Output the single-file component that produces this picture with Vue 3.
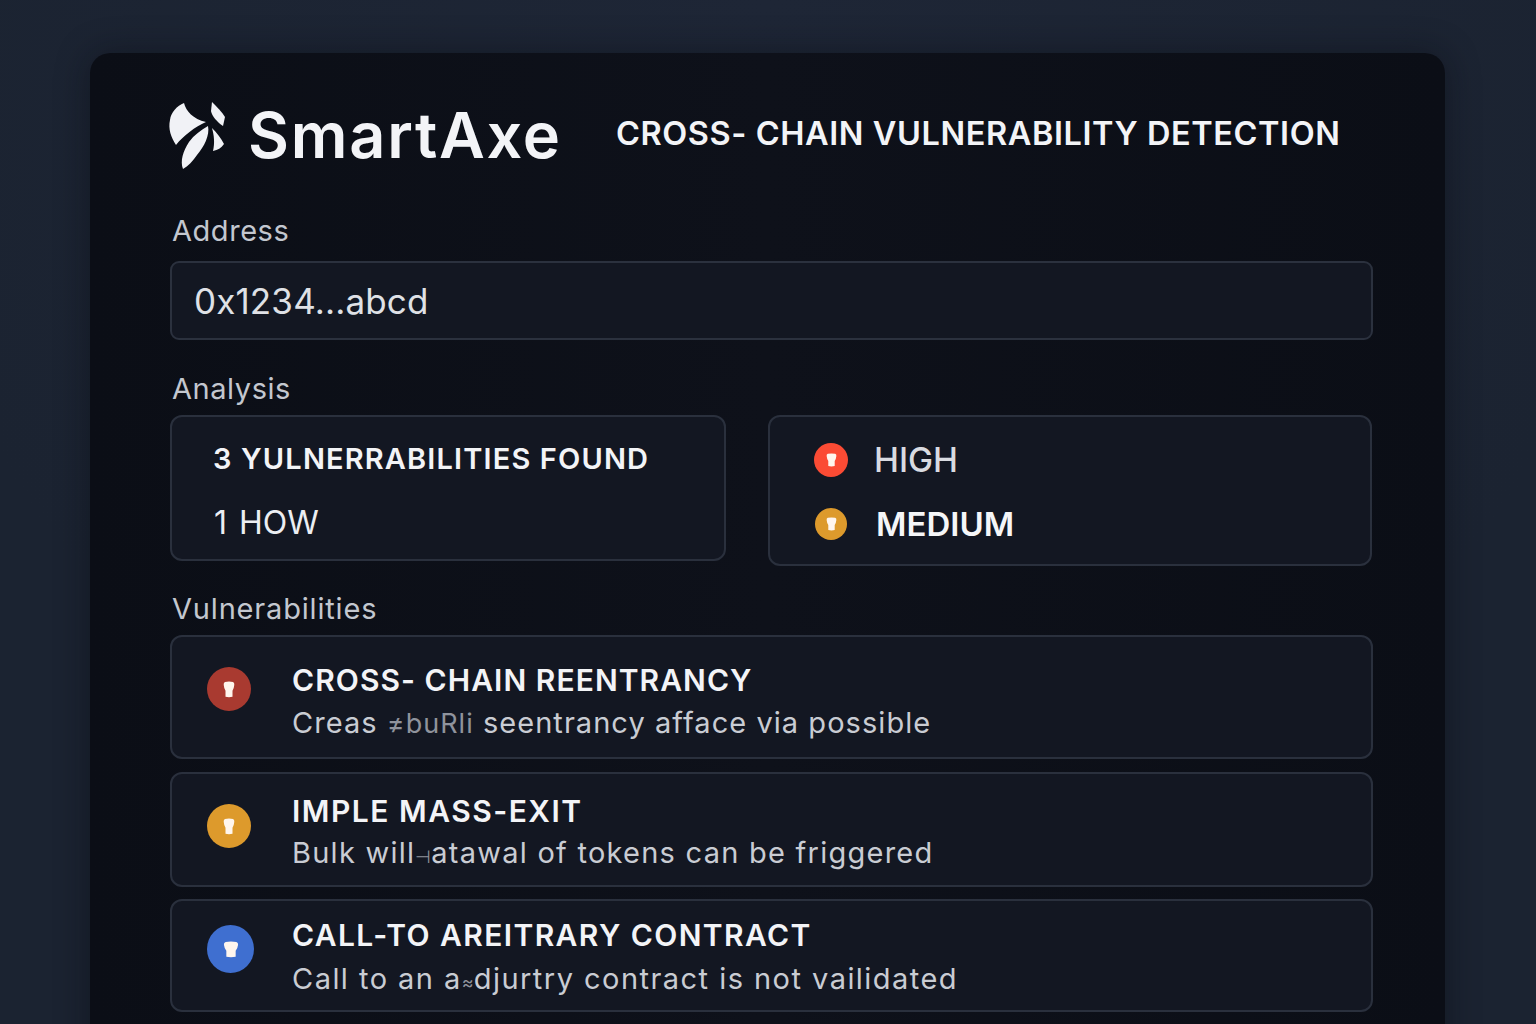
<script setup>
const icon = 'M2 .8Q6 0 10 .8Q11.500 1.200 11.300 3Q11 6 9.500 8V13Q6 13.800 2.500 13V8Q1 6 .7 3Q.5 1.200 2 .8Z'
const stats = [
  { label: 'HIGH', tone: 'high', weight: 'soft' },
  { label: 'MEDIUM', tone: 'medium', weight: 'strong' }
]
const vulns = [
  { title: 'CROSS- CHAIN REENTRANCY', pre: 'Creas ', odd: '≠buRli', post: ' seentrancy afface via possible', tone: 'red', cls: 'v1' },
  { title: 'IMPLE MASS-EXIT', pre: 'Bulk will', odd: '⊣', post: 'atawal of tokens can be friggered', tone: 'amber', cls: 'v2' },
  { title: 'CALL-TO AREITRARY CONTRACT', pre: 'Call to an a', odd: '≈', post: 'djurtry contract is not vailidated', tone: 'blue', cls: 'v3' }
]
</script>

<template>
  <div class="page">
    <main class="card">
      <header class="head">
        <svg class="logo" viewBox="17 15 60 72" aria-label="SmartAxe logo">
          <path fill="#f1f2f6" d="M34 18C36 26 43 34 56 37C45 42 34 50 26 60C21 52 18 44 20 35C21 27 27 21 34 18Z" />
          <path fill="#f1f2f6" d="M58 41C60 50 54 62 47 70C43 76 38 81 33 84C30 76 33 66 39 57C44 50 51 45 58 41Z" />
          <path fill="#f1f2f6" d="M62 17C67 22 72 27 75 32L73 41C67 37 62 31 61 26Z" />
          <path fill="#f1f2f6" d="M62 43C67 48 71 53 74 59C71 63 68 65 63 66C65 58 64 50 62 43Z" />
        </svg>
        <h1 class="brand">SmartAxe</h1>
        <h2 class="tag">CROSS- CHAIN VULNERABILITY DETECTION</h2>
      </header>

      <div class="label l-address">Address</div>
      <div class="input">0x1234...abcd</div>

      <div class="label l-analysis">Analysis</div>
      <section class="analysis">
        <div class="box left">
          <div class="found">3 YULNERRABILITIES FOUND</div>
          <div class="how">1 HOW</div>
        </div>
        <div class="box right">
          <div v-for="s in stats" :key="s.label" class="stat">
            <span class="dot" :class="s.tone">
              <svg viewBox="0 0 12 14" preserveAspectRatio="none"><path :d="icon" fill="#fff6ee" /></svg>
            </span>
            <span class="stat-text" :class="s.weight">{{ s.label }}</span>
          </div>
        </div>
      </section>

      <div class="label l-vuln">Vulnerabilities</div>
      <section class="list">
        <article v-for="v in vulns" :key="v.title" class="row" :class="v.cls">
          <span class="badge" :class="v.tone">
            <svg viewBox="0 0 12 14" preserveAspectRatio="none"><path :d="icon" fill="#fff6ee" /></svg>
          </span>
          <div class="copy">
            <div class="title">{{ v.title }}</div>
            <div class="desc">{{ v.pre }}<span class="odd">{{ v.odd }}</span>{{ v.post }}</div>
          </div>
        </article>
      </section>
    </main>
  </div>
</template>

<style>
html, body { margin: 0; background: #1c2433; overflow: hidden; }
</style>

<style scoped>
.page {
  width: 1536px;
  height: 1024px;
  box-sizing: border-box;
  padding: 53px 91px 0 90px;
  overflow: hidden;
  background: radial-gradient(circle at 50% 0, #1e2636, #1b2331 70%);
  font-family: Inter, "Liberation Sans", sans-serif;
  color: #f3f4f7;
}
.card {
  height: 1060px;
  box-sizing: border-box;
  padding: 47px 72px 0 80px;
  border-radius: 20px;
  background: linear-gradient(90deg, #0b0e16 0, #0e111a 50%, #0b0e16 100%);
  box-shadow: 0 0 34px rgba(8, 11, 18, .45);
}
.head { display: flex; align-items: center; height: 72px; }
.logo { width: 60px; height: 72px; margin-left: -3px; flex: none; }
.brand {
  margin: 0 0 2px 21px;
  font-size: 63px;
  line-height: 72px;
  font-weight: 600;
  letter-spacing: 1.75px;
  width: 367px;
  flex: none;
}
.tag {
  margin: -6px 0 0 1px;
  font-size: 32.500px;
  font-weight: 600;
  letter-spacing: .57px;
  white-space: nowrap;
}
.label {
  margin-left: 2px;
  font-size: 29px;
  line-height: 36px;
  color: #c3c7cf;
  letter-spacing: .55px;
}
.l-address { margin-top: 41px; }
.l-analysis { margin-top: 31px; }
.l-vuln { margin-top: 25px; letter-spacing: .82px; }
.input {
  margin-top: 12px;
  height: 79px;
  box-sizing: border-box;
  padding-left: 22px;
  display: flex;
  align-items: center;
  font-size: 35px;
  letter-spacing: .15px;
  color: #dfe1e6;
  background: #131722;
  border: 2px solid #2b313e;
  border-radius: 9px;
}
.analysis {
  margin-top: 8px;
  display: grid;
  grid-template-columns: 556px 604px;
  column-gap: 42px;
  align-items: start;
}
.box {
  box-sizing: border-box;
  background: #131722;
  border: 2px solid #2a303d;
  border-radius: 12px;
}
.left { height: 146px; padding: 22px 0 0 41px; }
.found { font-size: 29px; line-height: 40px; font-weight: 600; letter-spacing: 1.14px; white-space: nowrap; }
.how { margin-top: 24px; font-size: 32px; line-height: 40px; color: #eceef2; word-spacing: 3px; margin-left: 1px; }
.right { height: 151px; padding: 23px 0 0 43px; }
.stat { display: flex; align-items: center; height: 40px; }
.stat + .stat { margin-top: 24px; }
.dot {
  width: 34px;
  height: 34px;
  border-radius: 50%;
  display: flex;
  align-items: center;
  justify-content: center;
  flex: none;
}
.dot svg { width: 11px; height: 14px; }
.dot.high { background: #fb4b34; margin-left: 1px; }
.dot.medium { background: #dd9a2c; width: 32px; height: 32px; margin-left: 2px; margin-right: 1px; }
.stat-text { margin-left: 27px; line-height: 40px; }
.soft { color: #d9dbe1; font-weight: 500; font-size: 33.500px; margin-left: 26px; }
.strong { color: #f5f6f8; font-weight: 600; font-size: 33px; margin-left: 28px; }
.list { margin-top: 8px; display: flex; flex-direction: column; }
.row {
  box-sizing: border-box;
  display: flex;
  background: #131722;
  border: 2px solid #2a303d;
  border-radius: 12px;
}
.v1 { height: 124px; }
.v2 { height: 115px; margin-top: 13px; }
.v3 { height: 113px; margin-top: 12px; }
.badge {
  border-radius: 50%;
  display: flex;
  align-items: center;
  justify-content: center;
  flex: none;
}
.badge svg { width: 12px; height: 17px; }
.red { width: 44px; height: 44px; background: #a93a30; margin: 29px 0 0 35px; }
.amber { width: 44px; height: 44px; background: #dd9a2c; margin: 30px 0 0 35px; }
.blue { width: 47px; height: 48px; background: #3f6fd0; margin: 24px 0 0 35px; }
.red { margin-top: 30px; }
.blue svg { width: 16px; height: 17px; }
.copy { margin-left: 41px; }
.blue + .copy { margin-left: 38px; }
.title { font-size: 30px; line-height: 40px; font-weight: 600; letter-spacing: 1.05px; white-space: nowrap; }
.v1 .copy { padding-top: 23px; }
.v2 .copy { padding-top: 17px; }
.v3 .copy { padding-top: 14px; }
.v2 .title { letter-spacing: 1.5px; }
.v3 .title { letter-spacing: 1.4px; }
.desc { margin-top: 3px; font-size: 29px; line-height: 40px; color: #c9ccd3; letter-spacing: 1.05px; white-space: pre; }
.v2 .desc { margin-top: 2px; letter-spacing: 1.25px; }
.v3 .desc { margin-top: 4px; letter-spacing: 1.46px; }
.odd { font-size: 27px; color: #8f939c; letter-spacing: 1px; }
.v2 .odd, .v3 .odd { font-size: 18px; letter-spacing: 0; }
</style>
